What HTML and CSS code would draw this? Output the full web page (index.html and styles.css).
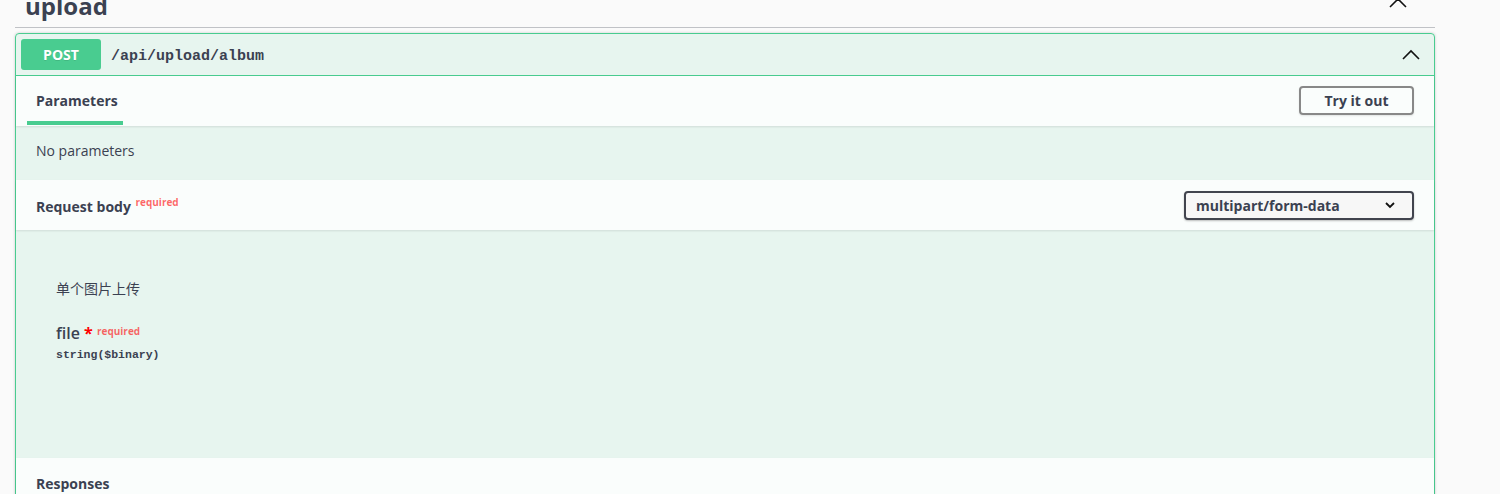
FILE: index.html
```html
<!DOCTYPE html>
<html lang="en">
<head>
<meta charset="utf-8">
<title>upload</title>
<link rel="stylesheet" href="styles.css">
</head>
<body>
<div class="wrapper">
  <div class="tag-header">
    <h3 class="tag-title">upload</h3>
    <svg class="tag-arrow" width="20" height="20" viewBox="0 0 20 20"><polyline points="2,8 10,0 18,8" fill="none" stroke="#111" stroke-width="1.6"/></svg>
  </div>

  <div class="opblock">
    <div class="summary">
      <span class="method">POST</span>
      <span class="path">/api/upload/album</span>
      <svg class="summary-arrow" width="20" height="20" viewBox="0 0 20 20"><polyline points="2,14 10,6 18,14" fill="none" stroke="#111" stroke-width="1.6"/></svg>
    </div>

    <div class="section-header">
      <div class="tab">Parameters</div>
      <button class="btn-try">Try it out</button>
    </div>
    <div class="no-params">No parameters</div>

    <div class="section-header">
      <div class="rb-title">Request body <sup class="req">required</sup></div>
      <div class="select">multipart/form-data
        <svg class="select-arrow" width="12" height="12" viewBox="0 0 12 12"><polyline points="2,4 6,8 10,4" fill="none" stroke="#111" stroke-width="1.8"/></svg>
      </div>
    </div>
    <div class="body">
      <div class="desc">单个图片上传</div>
      <div class="param-name">file <span class="star">*</span> <sup class="req2">required</sup></div>
      <div class="param-type">string($binary)</div>
    </div>

    <div class="section-header">
      <div class="rb-title">Responses</div>
    </div>
  </div>
</div>
</body>
</html>
```

FILE: styles.css
```css
html, body {
  margin: 0;
  padding: 0;
  background: #fafafa;
  color: #3b4151;
  font-family: "Open Sans", "Noto Sans", "Noto Sans CJK SC", sans-serif;
  overflow: hidden;
}
.wrapper {
  width: 1420px;
  margin-left: 15px;
}
.tag-header {
  height: 44px;
  margin-top: -16px;
  border-bottom: 1px solid rgba(59, 65, 81, 0.3);
  display: flex;
  align-items: center;
  justify-content: space-between;
  padding: 0 27px 0 10px;
  box-sizing: border-box;
}
.tag-title {
  margin: 0;
  font-size: 24px;
  font-weight: 700;
  line-height: 30px;
  color: #3b4151;
}
.tag-arrow {
  align-self: flex-start;
  margin-top: 15px;
}
.opblock {
  margin-top: 5px;
  border: 1px solid #49cc90;
  border-radius: 4px;
  background: rgba(73, 204, 144, 0.1);
  box-shadow: 0 0 3px rgba(0, 0, 0, 0.19);
}
.summary {
  display: flex;
  align-items: center;
  padding: 5px 13px 5px 5px;
  border-bottom: 1px solid #49cc90;
}
.method {
  width: 80px;
  height: 31px;
  border-radius: 3px;
  background: #49cc90;
  color: #fff;
  font-size: 14px;
  font-weight: 700;
  display: flex;
  align-items: center;
  justify-content: center;
  text-shadow: 0 1px 0 rgba(0, 0, 0, 0.1);
}
.path {
  margin-left: 10px;
  margin-top: 3px;
  font-family: "Liberation Mono", monospace;
  font-size: 15px;
  font-weight: 600;
  color: #3b4151;
  flex: 1;
}
.section-header {
  height: 50px;
  box-sizing: border-box;
  background: rgba(255, 255, 255, 0.8);
  box-shadow: 0 1px 2px rgba(0, 0, 0, 0.1);
  display: flex;
  align-items: center;
  justify-content: space-between;
  padding: 0 20px 0 11px;
}
.tab {
  align-self: stretch;
  display: flex;
  align-items: center;
  padding: 4px 5px 0 9px;
  margin-bottom: 1px;
  border-bottom: 4px solid #49cc90;
  font-size: 14px;
  font-weight: 700;
}
.btn-try {
  width: 115px;
  height: 29px;
  margin-top: -2px;
  border: 2px solid #888;
  border-radius: 4px;
  background: transparent;
  font-family: inherit;
  font-size: 14px;
  font-weight: 700;
  color: #3b4151;
  box-shadow: 0 1px 2px rgba(0, 0, 0, 0.1);
  padding: 0;
}
.no-params {
  padding: 15px 20px 19px;
  font-size: 14px;
  line-height: 20px;
}
.rb-title {
  padding-left: 9px;
  font-size: 14px;
  font-weight: 700;
}
.req {
  color: rgba(255, 0, 0, 0.6);
  font-size: 10px;
  font-weight: 700;
  vertical-align: 6px;
  margin-left: 1px;
}
.select {
  width: 230px;
  height: 29px;
  box-sizing: border-box;
  border: 2px solid #41444e;
  border-radius: 4px;
  background: #f7f7f7;
  box-shadow: 0 1px 2px rgba(0, 0, 0, 0.25);
  display: flex;
  align-items: center;
  justify-content: space-between;
  padding: 0 16px 0 10px;
  font-size: 14px;
  font-weight: 700;
}
.body {
  padding: 48px 40px 95px;
}
.desc {
  font-size: 14px;
  line-height: 20px;
  font-family: "Noto Sans CJK SC", sans-serif;
}
.param-name {
  margin-top: 22px;
  font-size: 16px;
  line-height: 22px;
  font-weight: 600;
}
.star {
  color: red;
  font-weight: 700;
}
.req2 {
  color: rgba(255, 0, 0, 0.6);
  font-size: 10px;
  font-weight: 700;
  vertical-align: 4px;
}
.param-type {
  margin-top: 3px;
  font-family: "Liberation Mono", monospace;
  font-size: 11.5px;
  line-height: 16px;
  font-weight: 700;
}
```
